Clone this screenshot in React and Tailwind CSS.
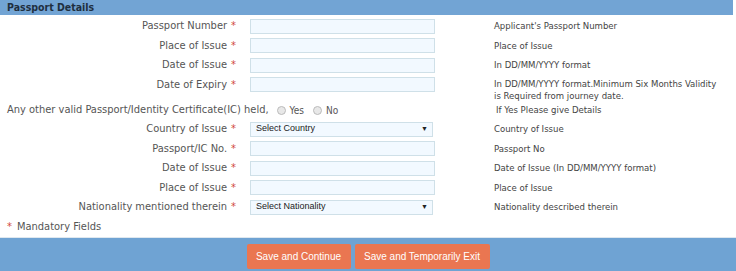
import React from 'react';

const labelFont = { fontFamily: '"DejaVu Sans Condensed", "DejaVu Sans", sans-serif' };

function Req() {
  return <span className="text-[#d0463c] ml-[4px]">*</span>;
}

function TextInput() {
  return <div className="w-[185px] h-[15px] border border-[#cfe0e8] bg-[#f2f9ff]" />;
}

function SelectBox({ text }) {
  return (
    <div className="w-[183px] h-[15px] border border-[#cfe0e8] bg-[#f2f9ff] flex items-center justify-between pl-[5px] pr-[4px] text-[9px] text-[#222] font-['Liberation_Sans',Arial,sans-serif]">
      <span>{text}</span>
      <span className="text-[7px]">▼</span>
    </div>
  );
}

function Row({ label, field, help, tall }) {
  return (
    <div className={`flex ${tall ? 'h-[25px] items-start' : 'h-[19.5px] items-center'}`}>
      <div className="w-[240px] text-right pr-[4px] text-[11px] leading-[19.5px] text-[#555]">
        {label}
        <Req />
      </div>
      <div className={`w-[254px] pl-[10px] ${tall ? 'pt-[2.5px]' : ''}`}>{field}</div>
      <div className={`text-[9.5px] text-[#444] leading-[12px] whitespace-nowrap ${tall ? 'pt-[3px]' : ''}`}>{help}</div>
    </div>
  );
}

export default function App() {
  const firstRows = [
    ['Passport Number', "Applicant's Passport Number"],
    ['Place of Issue', 'Place of Issue'],
    ['Date of Issue', 'In DD/MM/YYYY format'],
  ];

  const icRows = [
    ['Country of Issue', <SelectBox text="Select Country" />, 'Country of Issue'],
    ['Passport/IC No.', <TextInput />, 'Passport No'],
    ['Date of Issue', <TextInput />, 'Date of Issue (In DD/MM/YYYY format)'],
    ['Place of Issue', <TextInput />, 'Place of Issue'],
    ['Nationality mentioned therein', <SelectBox text="Select Nationality" />, 'Nationality described therein'],
  ];

  return (
    <div className="w-[736px] h-[271px] bg-white flex flex-col" style={labelFont}>
      <div className="h-[15px] bg-[#72a4d4] mr-[3px] pl-[7px] text-[10.5px] leading-[15px] font-bold text-[#1f2f3f]">
        Passport Details
      </div>

      <div className="pt-[1.25px] flex flex-col">
        {firstRows.map(([label, help]) => (
          <Row key={label + help} label={label} field={<TextInput />} help={help} />
        ))}
        <Row
          tall
          label="Date of Expiry"
          field={<TextInput />}
          help={
            <>
              In DD/MM/YYYY format.Minimum Six Months Validity
              <br />
              is Required from journey date.
            </>
          }
        />

        <div className="flex items-center h-[19.5px] pt-[1px]">
          <div className="w-[496px] pl-[7px] text-[11px] text-[#555] flex items-center">
            <span>Any other valid Passport/Identity Certificate(IC) held,</span>
            <span className="ml-[8px] w-[9px] h-[9px] rounded-full border border-[#bbb] bg-[#e8e8e8]" />
            <span className="ml-[4px] text-[10px]">Yes</span>
            <span className="ml-[9px] w-[9px] h-[9px] rounded-full border border-[#bbb] bg-[#e8e8e8]" />
            <span className="ml-[4px] text-[10px]">No</span>
          </div>
          <div className="text-[9.5px] text-[#444] whitespace-nowrap">If Yes Please give Details</div>
        </div>

        {icRows.map(([label, field, help]) => (
          <Row key={label + help} label={label} field={field} help={help} />
        ))}

        <div className="h-[19.5px] flex items-center pl-[7px] pt-[2px] text-[11px] text-[#555]">
          <span className="text-[#d0463c] mr-[5px]">*</span>
          Mandatory Fields
        </div>
      </div>

      <div className="mt-auto h-[34px] bg-[#6fa3d3] border-t border-[#dfe8ef] flex justify-center items-start pt-[6px] gap-[4px] font-['Liberation_Sans',Arial,sans-serif]">
        <button className="w-[104px] h-[25px] bg-[#ea7651] text-white text-[10px] rounded-[2px]">
          Save and Continue
        </button>
        <button className="w-[135px] h-[25px] bg-[#ea7651] text-white text-[10px] rounded-[2px]">
          Save and Temporarily Exit
        </button>
      </div>
    </div>
  );
}
